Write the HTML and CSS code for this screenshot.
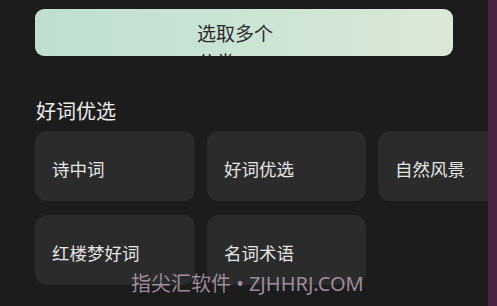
FILE: index.html
```html
<!DOCTYPE html>
<html lang="zh">
<head>
<meta charset="utf-8">
<link rel="stylesheet" href="styles.css">
</head>
<body>
<div class="screen">
  <main class="main">
    <button class="pick-btn"><span class="pick-label">选取多个分类</span></button>
    <h2 class="section-title">好词优选</h2>
    <div class="grid">
      <div class="card">诗中词</div>
      <div class="card">好词优选</div>
      <div class="card">自然风景</div>
      <div class="card">红楼梦好词</div>
      <div class="card">名词术语</div>
    </div>
    <div class="watermark">指尖汇软件 • ZJHHRJ.COM</div>
  </main>
  <div class="edge"></div>
</div>
</body>
</html>
```

FILE: styles.css
```css
html, body {
  margin: 0;
  padding: 0;
  background: #1c1c1c;
}
.screen {
  display: flex;
  width: 497px;
  height: 306px;
  overflow: hidden;
  font-family: "Noto Sans CJK SC", "Noto Sans", sans-serif;
}
.main {
  position: relative;
  flex: 0 0 488px;
  width: 488px;
  height: 306px;
  box-sizing: border-box;
  padding: 9px 0 0 35px;
  overflow: hidden;
  background: #1c1c1c;
}
.edge {
  flex: 1;
  background: #4a2441;
}
.pick-btn {
  display: block;
  width: 418px;
  height: 47px;
  margin: 0;
  border: none;
  border-radius: 9px;
  background: linear-gradient(90deg, #bfdfd1 0%, #cbe4d4 50%, #dce8d7 100%);
  padding: 9px 0 0 0;
  box-sizing: border-box;
  text-align: center;
  overflow: hidden;
  font-family: inherit;
  cursor: pointer;
}
.pick-label {
  display: inline-block;
  width: 94px;
  text-align: left;
  font-size: 19px;
  line-height: 29px;
  color: #2b2b2b;
  vertical-align: top;
}
.section-title {
  margin: 41px 0 6px 1px;
  font-size: 20px;
  line-height: 28px;
  font-weight: 400;
  color: #ececec;
}
.grid {
  display: grid;
  grid-template-columns: 160px 159px 159px;
  grid-auto-rows: 70px;
  column-gap: 12px;
  row-gap: 14px;
}
.card {
  display: flex;
  align-items: center;
  padding: 5px 0 0 17px;
  box-sizing: border-box;
  background: #2b2b2b;
  border-radius: 12px;
  font-size: 17.5px;
  color: #e4e4e4;
  white-space: nowrap;
}
.watermark {
  position: absolute;
  left: 131px;
  top: 270px;
  font-family: "Noto Sans", "Noto Sans CJK SC", sans-serif;
  font-size: 20px;
  line-height: 28px;
  color: rgba(196, 176, 196, 0.75);
  white-space: nowrap;
}
```
